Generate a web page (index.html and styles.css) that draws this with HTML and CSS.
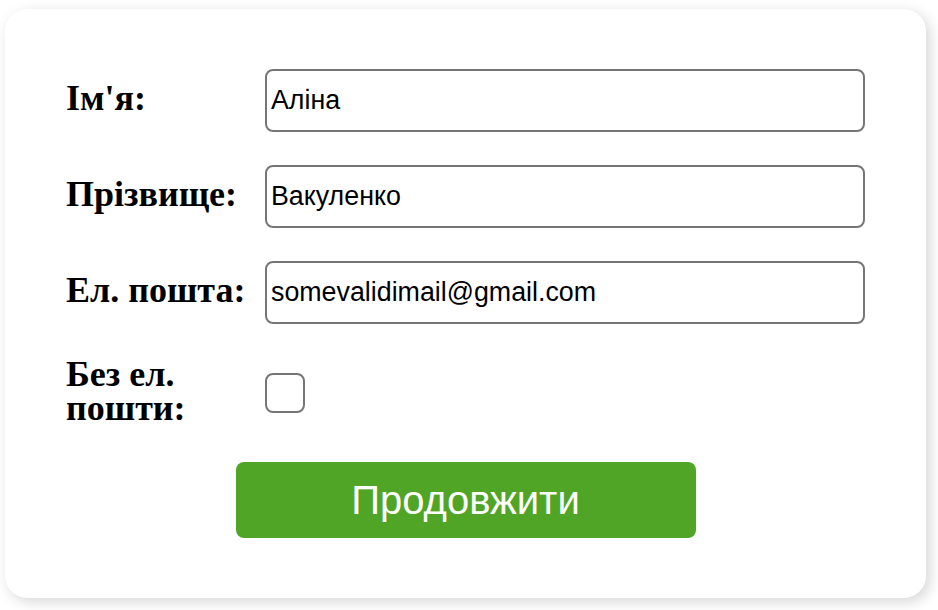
FILE: index.html
```html
<!DOCTYPE html>
<html lang="uk">
<head>
<meta charset="utf-8">
<title>Форма</title>
<link rel="stylesheet" href="styles.css">
</head>
<body>
<form class="card">
  <div class="grid">
    <label class="label" for="name">Ім'я:</label>
    <input class="field" id="name" type="text" value="Аліна">
    <label class="label" for="surname">Прізвище:</label>
    <input class="field" id="surname" type="text" value="Вакуленко">
    <label class="label" for="email">Ел. пошта:</label>
    <input class="field" id="email" type="text" value="somevalidimail@gmail.com">
    <label class="label label-wrap" for="noemail">Без ел. пошти:</label>
    <div class="check-cell"><span class="check" id="noemail"></span></div>
  </div>
  <div class="actions">
    <button class="submit" type="button">Продовжити</button>
  </div>
</form>
</body>
</html>
```
FILE: styles.css
```css
html, body {
  margin: 0;
  padding: 0;
  background: #ffffff;
}
body {
  padding: 9px 12px 12px 5px;
}
.card {
  box-sizing: border-box;
  width: 921px;
  height: 589px;
  background: #fff;
  border-radius: 22px;
  box-shadow: 4px 4px 14px rgba(0, 0, 0, 0.16);
  padding: 60px 61px 60px 61px;
}
.grid {
  display: grid;
  grid-template-columns: 190px 1fr;
  column-gap: 9px;
  row-gap: 33px;
  align-items: center;
}
.label {
  font-family: "Liberation Serif", "Times New Roman", serif;
  font-weight: bold;
  font-size: 36px;
  line-height: 34px;
  color: #000;
  position: relative;
  top: -3px;
}
.label-wrap {
  top: 0;
}
.field {
  box-sizing: border-box;
  width: 600px;
  height: 63px;
  margin: 0;
  border: 2px solid #767676;
  border-radius: 8px;
  padding: 0 4px;
  font-family: "Liberation Sans", Arial, sans-serif;
  font-size: 26.8px;
  color: #000;
  background: #fff;
  outline: none;
}
.check-cell {
  display: flex;
  align-items: center;
  height: 68px;
  padding-top: 4px;
  box-sizing: border-box;
}
.check {
  box-sizing: border-box;
  width: 40px;
  height: 40px;
  border: 2px solid #767676;
  border-radius: 8px;
  background: #fff;
}
.actions {
  display: flex;
  justify-content: center;
  margin-top: 37px;
}
.submit {
  width: 460px;
  height: 76px;
  border: none;
  border-radius: 8px;
  background: #50a526;
  color: #fff;
  font-family: "Liberation Sans", Arial, sans-serif;
  font-size: 40px;
  cursor: pointer;
}
```
